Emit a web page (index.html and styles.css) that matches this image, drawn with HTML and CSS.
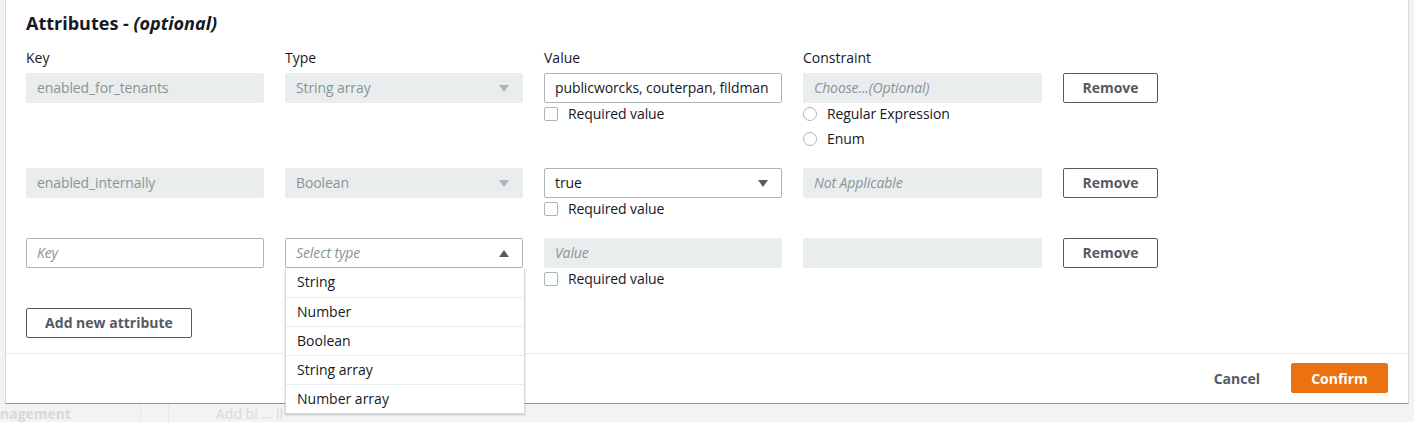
FILE: index.html
```html
<!DOCTYPE html>
<html lang="en">
<head>
    <meta charset="UTF-8">
    <title>Attributes</title>
    <link rel="stylesheet" href="styles.css">
</head>
<body>

    <div class="modal">
        <div class="modal-body">
            <h2 class="title">Attributes - <em>(optional)</em></h2>

            <div class="attr-row labels">
                <div class="label">Key</div>
                <div class="label">Type</div>
                <div class="label">Value</div>
                <div class="label">Constraint</div>
                <div></div>
            </div>

            <!-- row 1 -->
            <div class="attr-row">
                <div><div class="field disabled">enabled_for_tenants</div></div>
                <div><div class="field disabled select">String array <span class="caret down muted"></span></div></div>
                <div>
                    <div class="field">publicworcks, couterpan, fildman</div>
                    <label class="option"><span class="box"></span>Required value</label>
                </div>
                <div>
                    <div class="field disabled placeholder">Choose...(Optional)</div>
                    <label class="option"><span class="radio"></span>Regular Expression</label>
                    <label class="option"><span class="radio"></span>Enum</label>
                </div>
                <div><button class="btn">Remove</button></div>
            </div>

            <!-- row 2 -->
            <div class="attr-row">
                <div><div class="field disabled">enabled_internally</div></div>
                <div><div class="field disabled select">Boolean <span class="caret down muted"></span></div></div>
                <div>
                    <div class="field select">true <span class="caret down"></span></div>
                    <label class="option"><span class="box"></span>Required value</label>
                </div>
                <div><div class="field disabled placeholder">Not Applicable</div></div>
                <div><button class="btn">Remove</button></div>
            </div>

            <!-- row 3 -->
            <div class="attr-row">
                <div><div class="field placeholder">Key</div></div>
                <div class="dropdown-wrap">
                    <div class="field select placeholder">Select type <span class="caret up"></span></div>
                    <ul class="menu">
                        <li>String</li>
                        <li>Number</li>
                        <li>Boolean</li>
                        <li>String array</li>
                        <li>Number array</li>
                    </ul>
                </div>
                <div>
                    <div class="field disabled placeholder">Value</div>
                    <label class="option"><span class="box"></span>Required value</label>
                </div>
                <div><div class="field disabled"></div></div>
                <div><button class="btn">Remove</button></div>
            </div>

            <button class="btn add-btn">Add new attribute</button>
        </div>

        <div class="modal-footer">
            <button class="link-btn">Cancel</button>
            <button class="primary-btn">Confirm</button>
        </div>
    </div>

    <div class="behind">
        <span class="behind-title">nagement</span>
        <span class="behind-line"></span>
        <span class="behind-line"></span>
        <span class="behind-text">Add bi ... ll</span>
    </div>

</body>
</html>
```

FILE: styles.css
```css
body {
    margin: 0;
    background-color: #f2f3f3;
    font-family: "Open Sans", Arial, sans-serif;
    font-size: 14px;
    color: #16191f;
}

.modal {
    margin-left: 5px;
    width: 1402px;
    background-color: #ffffff;
    border-left: 1px solid #d5dbdb;
    border-right: 1px solid #d5dbdb;
    border-bottom: 1px solid #879596;
}

.modal-body {
    padding: 10px 20px 15px 20px;
    border-bottom: 1px solid #eaeded;
}

.title {
    margin: 0 0 12px 0;
    font-size: 18px;
    line-height: 26px;
    font-weight: 700;
}

.attr-row {
    display: grid;
    grid-template-columns: 238px 238px 238px 239px 95px;
    column-gap: 21px;
    margin-bottom: 19px;
}

.attr-row.labels {
    margin-bottom: 5px;
}

.label {
    line-height: 20px;
}

.field {
    box-sizing: border-box;
    height: 30px;
    line-height: 28px;
    padding: 0 10px;
    border: 1px solid #aab7b8;
    border-radius: 2px;
    background-color: #ffffff;
    white-space: nowrap;
    overflow: hidden;
    position: relative;
    letter-spacing: -0.1px;
}

.field.disabled {
    background-color: #eaeded;
    border-color: #eaeded;
    color: #879596;
}

.field.placeholder {
    color: #879596;
    font-style: italic;
}

.caret {
    position: absolute;
    right: 13px;
    top: 11px;
    width: 0;
    height: 0;
    border-left: 5px solid transparent;
    border-right: 5px solid transparent;
}

.caret.down {
    border-top: 7px solid #545b64;
}

.caret.up {
    border-bottom: 7px solid #545b64;
}

.caret.muted {
    border-top-color: #aab7b8;
}

.option {
    display: flex;
    align-items: center;
    height: 21px;
    margin-bottom: 4px;
    letter-spacing: -0.1px;
}

.option:last-child {
    margin-bottom: 0;
}

.box {
    box-sizing: border-box;
    width: 14px;
    height: 14px;
    border: 1px solid #aab7b8;
    border-radius: 2px;
    margin-right: 10px;
}

.radio {
    box-sizing: border-box;
    width: 14px;
    height: 14px;
    border: 1px solid #aab7b8;
    border-radius: 50%;
    margin-right: 10px;
}

.btn {
    box-sizing: border-box;
    height: 30px;
    width: 95px;
    background-color: #ffffff;
    border: 1px solid #545b64;
    border-radius: 2px;
    color: #545b64;
    font-family: inherit;
    font-size: 14px;
    font-weight: 700;
    line-height: 26px;
    cursor: pointer;
}

.add-btn {
    width: 166px;
}

.dropdown-wrap {
    position: relative;
}

.menu {
    position: absolute;
    top: 30px;
    left: 0;
    width: 240px;
    box-sizing: border-box;
    margin: 0;
    padding: 0;
    list-style: none;
    background-color: #ffffff;
    border: 1px solid #d5dbdb;
    border-top: none;
    box-shadow: 0 1px 2px rgba(0, 0, 0, 0.2);
    z-index: 2;
}

.menu li {
    height: 29px;
    line-height: 28px;
    padding-left: 11px;
    border-top: 1px solid #eaeded;
    box-sizing: border-box;
}

.menu li:first-child {
    border-top: none;
}

.modal-footer {
    display: flex;
    justify-content: flex-end;
    align-items: center;
    gap: 23px;
    padding: 9px 20px 10px 20px;
}

.link-btn {
    background: none;
    border: none;
    color: #545b64;
    font-family: inherit;
    font-size: 14px;
    font-weight: 700;
    padding: 0 8px;
}

.primary-btn {
    box-sizing: border-box;
    height: 30px;
    width: 97px;
    background-color: #ec7211;
    border: 1px solid #ec7211;
    border-radius: 2px;
    color: #ffffff;
    font-family: inherit;
    font-size: 14px;
    font-weight: 700;
}

.behind {
    display: flex;
    align-items: center;
    height: 18px;
    color: #d5dbdb;
    font-weight: 700;
    overflow: hidden;
}

.behind-title {
    width: 140px;
}

.behind-line {
    width: 1px;
    height: 18px;
    background-color: #e4e7e7;
    margin-right: 27px;
}

.behind-text {
    margin-left: 20px;
    font-weight: 400;
}
```
